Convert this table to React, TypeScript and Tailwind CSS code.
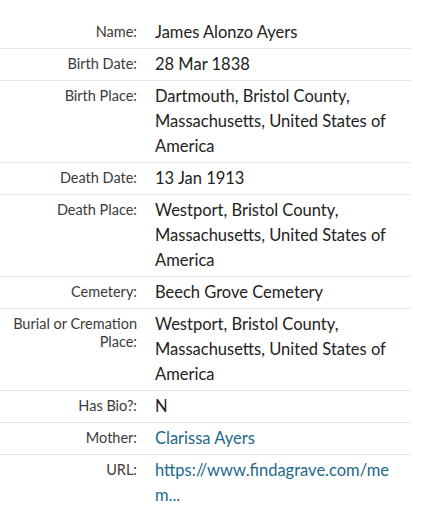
const rows: { label: string; value: string; link?: boolean; breakAll?: boolean }[] = [
  { label: "Name:", value: "James Alonzo Ayers" },
  { label: "Birth Date:", value: "28 Mar 1838" },
  { label: "Birth Place:", value: "Dartmouth, Bristol County, Massachusetts, United States of America" },
  { label: "Death Date:", value: "13 Jan 1913" },
  { label: "Death Place:", value: "Westport, Bristol County, Massachusetts, United States of America" },
  { label: "Cemetery:", value: "Beech Grove Cemetery" },
  { label: "Burial or Cremation Place:", value: "Westport, Bristol County, Massachusetts, United States of America" },
  { label: "Has Bio?:", value: "N" },
  { label: "Mother:", value: "Clarissa Ayers", link: true },
  { label: "URL:", value: "https://www.findagrave.com/mem...", link: true, breakAll: true },
];

export default function App() {
  return (
    <div className="min-h-[511px] bg-white pt-[17px] font-['Lato','Liberation_Sans',sans-serif]">
      <div className="w-[411px]">
        {rows.map((row, i) => (
          <div
            key={row.label}
            className={`flex ${i < rows.length - 1 ? "border-b border-[#e6e6e6]" : ""}`}
          >
            <div className="w-[137px] shrink-0 pt-[6px] pb-[3px] pl-2 text-right text-[14.5px] leading-[18px] text-[#3b3b3b]">
              {row.label}
            </div>
            <div
              className={`w-[260px] pl-[18px] py-[3px] text-[16.5px] leading-[25px] ${
                row.link ? "text-[#22698c]" : "text-[#222]"
              } ${row.breakAll ? "break-all" : ""}`}
            >
              {row.value}
            </div>
          </div>
        ))}
      </div>
    </div>
  );
}
